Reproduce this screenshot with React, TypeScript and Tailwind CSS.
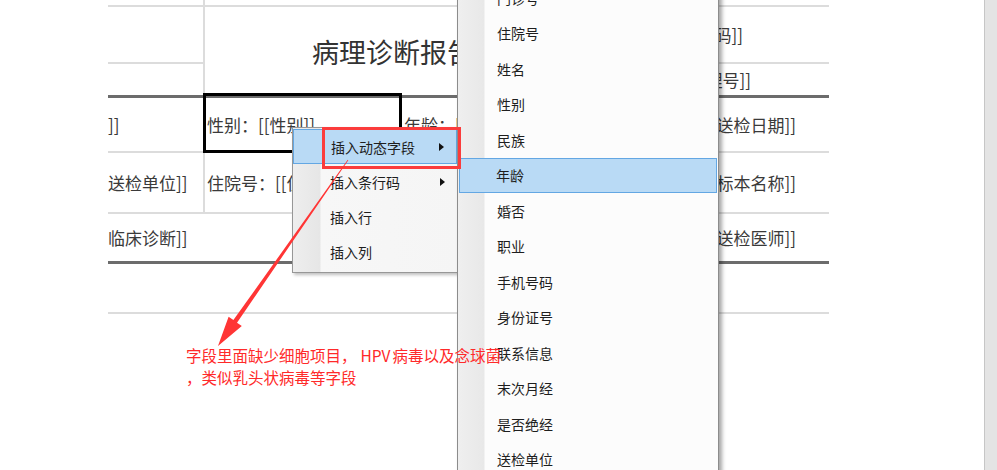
import React from 'react';

const fieldItems = [
  '门诊号',
  '住院号',
  '姓名',
  '性别',
  '民族',
  '年龄',
  '婚否',
  '职业',
  '手机号码',
  '身份证号',
  '联系信息',
  '末次月经',
  '是否绝经',
  '送检单位',
  '送检医生',
];

const menuItems = [
  { name: '插入动态字段', sub: true, active: true },
  { name: '插入条行码', sub: true, active: false },
  { name: '插入行', sub: false, active: false },
  { name: '插入列', sub: false, active: false },
];

function SubArrow() {
  return (
    <svg width="5" height="8" viewBox="0 0 5 8" className="shrink-0">
      <path d="M0 0 L5 4 L0 8 Z" fill="#111" />
    </svg>
  );
}

function ReportTable() {
  return (
    <div className="w-[721px] shrink-0 flex flex-col text-[17px] leading-none text-[#3a3a3a]">
      {/* top edge */}
      <div className="flex h-[7px] border-b-2 border-[#dcdcdc]">
        <div className="w-[97px] border-r-2 border-[#dcdcdc]" />
      </div>

      {/* title block */}
      <div className="flex h-[88px]">
        <div className="w-[97px] flex flex-col border-r-2 border-[#dcdcdc]">
          <div className="h-[57px] border-b-2 border-[#dcdcdc]" />
          <div className="flex-1" />
        </div>
        <div className="flex-1 flex items-center pl-[107px] text-[27px] text-[#333]">病理诊断报告</div>
        <div className="w-[135px] flex flex-col">
          <div className="h-[57px] flex items-center -ml-[8px] border-b-2 border-[#dcdcdc]">[[条码]]</div>
          <div className="flex-1 flex items-center -ml-[17px]">[[病理号]]</div>
        </div>
      </div>
      <div className="h-[3px] bg-[#6c6c6c]" />

      {/* row 1 */}
      <div className="flex h-[55px] border-b-2 border-[#dcdcdc]">
        <div className="w-[97px] flex items-center">]]</div>
        <div className="relative w-[197px] flex items-center pl-[2px]">
          性别：[[性别]]
          <div className="absolute -top-[5px] -bottom-[2px] -left-[2px] right-0 border-[3px] border-black" />
        </div>
        <div className="flex-1 flex items-center pl-[2px]">年龄：[[年龄]]</div>
        <div className="w-[135px] flex items-center pl-[11px]">[[送检日期]]</div>
      </div>

      {/* row 2 */}
      <div className="flex h-[61px] border-b-2 border-[#dcdcdc]">
        <div className="w-[97px] flex items-center border-r-2 border-[#dcdcdc]">送检单位]]</div>
        <div className="flex-1 flex items-center pl-[2px]">住院号：[[住院号]]</div>
        <div className="w-[135px] flex items-center pl-[11px]">[[标本名称]]</div>
      </div>

      {/* row 3 */}
      <div className="flex h-[47px]">
        <div className="flex-1 flex items-center">临床诊断]]</div>
        <div className="w-[135px] flex items-center pl-[11px]">[[送检医师]]</div>
      </div>
      <div className="h-[3px] bg-[#6c6c6c]" />

      {/* empty row */}
      <div className="h-[50px] border-b-2 border-[#dcdcdc]" />
    </div>
  );
}

export default function App() {
  return (
    <div className="relative w-[997px] h-[470px] overflow-hidden bg-white flex font-['Noto_Sans_CJK_SC',sans-serif]">
      <div className="w-[108px] shrink-0" />
      <ReportTable />
      <div className="flex-1" />
      <div className="w-[13px] shrink-0 bg-[#e4e4e4] border-l border-[#c6c6c6]" />

      {/* context menu */}
      <div className="absolute left-[292px] top-[127px] w-[166px] h-[146px] pt-[1px] border border-[#979797] bg-[linear-gradient(to_right,#eeeeee_0px,#e6e6e6_27px,#f7f7f7_28px,#f5f5f5_100%)] shadow-[2px_2px_3px_rgba(0,0,0,0.25)] text-[14px] leading-none text-[#1e1e1e]">
        {menuItems.map((item) => (
          <div
            key={item.name}
            className={`h-[35px] flex items-center justify-between pl-[37px] pr-[12px] ${
              item.active ? 'bg-[#b9daf5] border border-[#63a7e3]' : ''
            }`}
          >
            <span>{item.name}</span>
            {item.sub && <SubArrow />}
          </div>
        ))}
      </div>

      {/* field submenu */}
      <div className="absolute left-[457px] top-[-22px] w-[262px] h-[520px] pt-[2px] border-l border-r border-[#8c8c8c] bg-[linear-gradient(to_right,#efefef_0px,#e8e8e8_26px,#fcfcfc_27px,#fcfcfc_100%)] shadow-[3px_0_4px_rgba(0,0,0,0.35)] text-[14px] leading-none text-[#1e1e1e]">
        {fieldItems.map((f) => (
          <div
            key={f}
            className={`h-[35.5px] flex items-center ${
              f === '年龄' ? 'bg-[#b9daf5] border border-[#63a7e3] mx-[1px] pl-[36px]' : 'pl-[39px]'
            }`}
          >
            {f}
          </div>
        ))}
      </div>

      {/* annotation */}
      <div className="absolute left-[322px] top-[127px] w-[139px] h-[42px] border-[3px] border-[#fb3c3c]" />
      <svg className="absolute left-0 top-0 pointer-events-none" width="997" height="470">
        <polygon
          points="348.3,160.2 237,322.7 241.8,326 218,346 228.6,316.8 233.4,320.1 347.7,159.8"
          fill="#ff3535"
        />
      </svg>
      <div className="absolute left-[186px] top-[344px] text-[15.5px] leading-[22px] text-[#ff2a2a] whitespace-nowrap">
        <div>
          字段里面缺少细胞项目，<span className="ml-[4px] mr-[2px]">HPV</span>病毒以及念球菌
        </div>
        <div>，类似乳头状病毒等字段</div>
      </div>
    </div>
  );
}
